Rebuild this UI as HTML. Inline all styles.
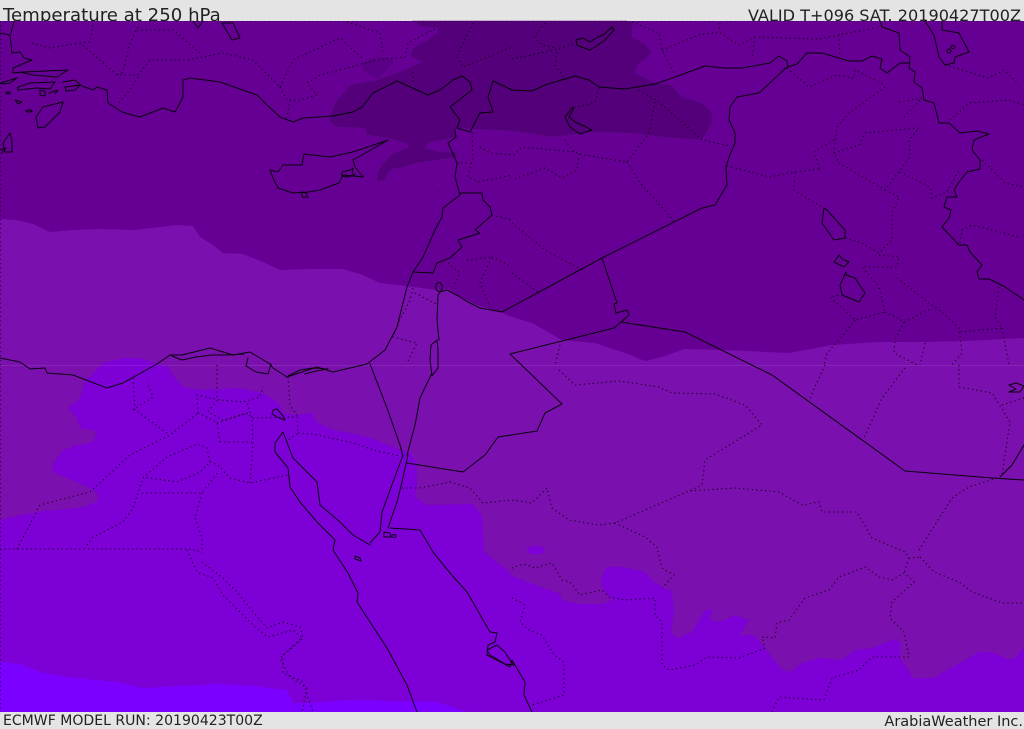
<!DOCTYPE html>
<html><head><meta charset="utf-8"><style>
html,body{margin:0;padding:0;background:#e4e4e4;width:1024px;height:729px;overflow:hidden}
svg{position:absolute;left:0;top:0}
.t{font-family:"DejaVu Sans","Liberation Sans",sans-serif;fill:#222}
.c{fill:none;stroke:#000;stroke-width:1;stroke-linejoin:round;stroke-linecap:round;opacity:.92}
.d{fill:none;stroke:#000;stroke-width:1.1;stroke-dasharray:1.2 3.2;opacity:.85}
</style></head><body>
<svg width="1024" height="729" viewBox="0 0 1024 729" xmlns="http://www.w3.org/2000/svg">
<rect width="1024" height="729" fill="#e4e4e4"/>
<text class="t" x="3" y="21" font-size="18.15">Temperature at 250 hPa</text>
<text class="t" x="1021" y="21" font-size="16.1" text-anchor="end">VALID T+096 SAT. 20190427T00Z</text>
<rect x="0" y="21" width="1024" height="691" fill="#660094"/>
<polygon fill="#53007a" stroke="#5e0a88" stroke-width=".6" points="413,21 422,27 437,28 437,33 427,40 413,48 410,55 421,62 400,72 377,80 350,85 337,100 331,113 330,122 337,127 365,128 367,135 387,138 408,144 408,148 393,153 383,163 377,173 377,182 385,180 390,170 417,163 457,157 457,152 440,152 425,148 430,142 447,139 456,137 455,132 457,128 473,129 512,131 552,137 592,132 629,133 662,137 702,140 712,123 712,113 702,103 682,97 672,85 655,83 635,73 638,65 652,53 644,43 632,37 633,23 627,21"/>
<polygon fill="#5a0086" points="362,62 377,57 392,58 393,63 378,79 363,70"/>
<polygon fill="#5c0088" points="435,191 445,188 444,190 436,193"/>
<polygon fill="#7a10ad" points="0,219 17,220 33,224 50,232 73,230 100,229 133,230 160,227 177,225 193,226 200,237 213,245 223,253 243,254 263,262 280,270 310,269 343,269 363,275 380,283 407,286 437,290 448,289 460,297 477,305 500,312 512,317 532,323 562,340 595,343 625,353 645,361 662,357 685,349 725,350 789,353 832,345 879,342 925,342 965,341 1024,338 1024,712 0,712"/>
<polygon fill="#7d00d6" points="0,520 20,515 43,511 80,508 97,502 98,495 90,488 53,472 52,465 63,450 77,445 93,442 97,433 93,430 80,428 77,418 68,408 80,398 85,382 100,366 103,363 123,358 140,358 157,364 168,366 173,375 183,387 200,390 240,388 263,393 278,402 283,413 293,415 312,413 317,422 333,430 360,435 377,440 400,450 410,452 417,463 417,485 415,497 427,505 473,504 482,515 484,552 497,562 507,570 512,576 549,590 559,593 562,600 579,604 602,604 612,600 602,588 601,578 607,567 622,567 645,572 654,582 672,592 674,612 671,632 677,638 692,632 705,610 714,610 709,617 715,622 725,620 735,615 749,620 740,635 754,635 765,648 782,670 790,672 802,663 819,658 842,660 855,650 872,648 895,639 901,643 899,657 909,670 912,678 934,678 952,667 969,658 979,652 992,652 1009,660 1015,658 1024,647 1024,712 0,712"/>
<ellipse cx="536" cy="550" rx="9" ry="4.5" fill="#7d00d6"/>
<polygon fill="#7b00ff" points="0,662 20,664 43,673 73,678 117,682 143,688 180,686 217,684 253,686 287,690 293,703 310,703 347,700 437,702 467,712 0,712"/>
<rect x="0" y="365" width="1024" height="1" fill="#fff" opacity=".09"/>
<line x1="0" y1="21.5" x2="1024" y2="21.5" class="d" style="opacity:.45"/>
<line x1="0.5" y1="21" x2="0.5" y2="712" class="d" style="opacity:.6"/>

<g class="c">
<polyline points="63,82 75,80 82,86 93,90 97,87 107,90 108,103 122,112 132,115 140,117 163,108 175,112 180,103 183,97 183,80 190,78 220,82 257,95 267,105 280,117 293,122 303,118 333,116 353,112 362,107 373,93 397,81 428,95 440,90 453,80 462,76 470,82 472,90 450,107 460,120 457,128 470,132 480,113 493,112 488,97 493,81 512,90 532,91 545,85 575,76 589,80 599,87 625,89 655,84 675,77 705,66 725,68 742,68 770,63 779,56 787,61 788,67 797,64 807,53 822,53 849,61 862,61 872,56 882,59 880,68 887,73 900,63 910,63"/>
<polyline points="880,21 882,27 899,33 900,50 910,57 909,68 915,72 914,82 922,88 924,100 934,103 939,123 949,123 960,133 977,131 989,134 974,140 972,150 980,160 980,169 967,172 959,182 954,190 957,197 947,197 944,207 951,210 949,218 942,227 959,245 967,245 970,252 982,265 977,272 979,279 989,279 1005,287 1024,300"/>
<polyline points="787,67 759,93 737,97 730,107 729,120 735,133 735,143 729,157 726,167 727,185 715,205 702,208 602,258 502,312 480,308 466,301 460,297 447,290 440,292 438,295 437,320 439,340"/>
<polyline points="602,258 617,303 614,304 616,313 627,310 629,315 614,328 510,354 562,404 545,413 537,431 498,437 485,455 463,472 407,463"/>
<polyline points="621,322 685,332 772,375 905,471 992,478 1024,480"/>
<polyline points="1000,477 1012,465 1024,445"/>
<polyline points="370,364 387,408 400,445 403,457"/>
<polyline points="367,364 385,350 397,327 407,287 413,272 423,257 435,230 442,217 443,208 460,195 455,177 457,163 448,143 456,137 455,130"/>
<polyline points="413,272 433,273 437,263 450,258 462,247 458,240 480,233 475,230 492,215 490,207 483,200 482,193 460,193"/>
<ellipse cx="439" cy="287" rx="3.3" ry="4.5"/>
<polygon points="437,340 431,345 430,360 432,376 438,368 438,350"/>
<polyline points="432,373 420,398 415,425 407,455"/>
<polyline points="408,455 402,482 397,502 388,528"/>
<polyline points="403,455 393,482 382,512 380,532 370,543"/>
<polyline points="370,545 353,535 340,522 320,505 317,482 293,458 283,432 275,443 275,452 288,468 290,487 300,502 317,522 335,540 333,550 348,573 358,593 357,602 387,648 407,685 417,712"/>
<polyline points="390,528 420,530 433,552 450,573 467,592 490,632 497,633 495,642 488,645 487,655 510,667 512,660 525,682 524,695 532,712"/>
<polyline points="0,358 20,362 30,369 45,368 47,373 73,375 107,388 123,383 157,364 170,355 182,355 210,348 233,355 250,352 270,364 273,368 287,377 317,367 333,372 367,364"/>
<polyline points="172,356 182,360 196,357 212,355 228,355 244,354"/>
<polyline points="248,358 246,366 256,372 268,374 271,364"/>
<polyline points="288,376 300,370 313,368 328,369 316,371 305,374"/>
<polygon points="270,170 278,172 283,165 302,165 304,154 330,157 353,152 388,140 353,160 355,167 363,177 343,175 339,183 320,190 308,192 293,193 278,188 273,178"/>
<polyline points="342,172 350,170 353,168 352,173 355,175 347,177 342,176 342,172"/>
<polyline points="302,192 306,193 308,197 302,197 302,192"/>
<polygon points="63,102 43,107 36,117 38,128 45,127 60,112"/>
<polygon points="10,133 3,143 5,152 12,152 12,140"/>
<polygon points="18,87 30,83 55,82 50,89 37,88 18,90"/>
<polyline points="0,33 10,35 12,53 20,52 24,58 32,60 13,68 13,73 23,72 68,70 57,77 33,75 20,72"/>
<polyline points="14,21 11,33"/>
<polygon points="0,83 17,78 10,83 2,84"/>
<polygon points="40,90 45,91 45,96 40,95"/>
<ellipse cx="8" cy="93" rx="2" ry="1"/>
<polygon points="15,100 22,102 18,104"/>
<ellipse cx="29" cy="111" rx="3" ry="1"/>
<polyline points="0,150 6,148 2,153"/>
<polygon points="65,87 80,85 75,90 66,91"/>
<polyline points="49,93 58,90 55,94"/>
<polygon points="222,23 232,40 240,38 233,23"/>
<polyline points="193,21 198,28 203,21"/>
<polygon points="576,40 583,38 590,42 598,37 603,35 612,27 614,30 605,40 595,47 590,50 584,48 577,45"/>
<polygon points="573,107 565,117 570,127 580,134 592,130 584,126 575,122 569,117 574,108"/>
<polyline points="925,21 934,35 939,57 945,65 954,63 955,57 969,52 959,33 942,30 942,21"/>
<ellipse cx="949" cy="51" rx="2" ry="2"/><ellipse cx="953" cy="47" rx="2" ry="1.5"/>
<polygon points="824,208 822,223 834,240 845,238 845,230 827,210"/>
<polygon points="839,255 834,262 844,267 849,262 842,259"/>
<polygon points="846,272 840,285 842,295 859,302 865,293 855,278 846,275"/>
<polyline points="1009,385 1016,383 1024,386 1020,392 1009,392 1016,389 1009,385"/>
<polygon points="273,410 272,414 279,418 285,420 283,416 277,409"/>
<polygon points="384,532 390,533 391,537 384,537"/><ellipse cx="394" cy="536" rx="2" ry="1.5"/>
<polygon points="355,556 360,558 361,561 355,559"/>
<polygon points="487,650 497,645 505,652 510,660 514,665 505,664 490,655"/>
</g>

<g class="d">
<polyline points="0,549 190,549 202,552"/>
<polyline points="17,549 40,505 90,492 130,455 170,435 198,413"/>
<polyline points="87,545 93,537 123,522 133,508 143,478 167,457 197,444 207,448 210,462 200,472 177,482 143,477"/>
<polyline points="142,493 202,493 218,472"/>
<polyline points="202,493 195,518 202,538 202,553"/>
<polyline points="210,462 218,465 230,478 250,483 288,475"/>
<polyline points="250,483 253,442 252,418 247,402"/>
<polyline points="220,442 253,442"/>
<polyline points="220,442 217,423 213,420 198,413"/>
<polyline points="198,413 197,395 220,400 243,402 260,397 263,387"/>
<polyline points="217,423 248,413 252,418 297,417 298,433 288,440"/>
<polyline points="298,433 313,434 353,443 377,451 400,456"/>
<polyline points="288,377 290,405 298,417"/>
<polyline points="217,365 217,400 208,412 223,420 248,413"/>
<polyline points="133,378 135,410 167,433"/>
<polyline points="133,410 153,397 147,382"/>
<polyline points="187,550 197,572 213,578 223,595 255,627 268,637 293,630 302,638 283,655 283,673 303,682 308,698 313,712"/>
<polyline points="202,562 223,578 237,592 253,612 267,628 283,622 300,627 303,638 287,652 280,658 290,677 307,688 302,712"/>
<polyline points="402,488 420,488 450,482 470,488 483,503 512,500 532,503 547,488 552,508 569,520 599,525 615,523 652,507 689,491 735,488 779,492 802,505 819,502 822,512 857,512 872,538 905,552 909,558 920,557"/>
<polyline points="615,523 645,537 657,547 662,568 674,575 662,588"/>
<polyline points="512,568 524,564 535,568 552,563 562,580 570,582 580,595 602,590 609,597 625,600 655,598 655,615 662,622 662,665 669,670 695,665 707,657 739,658 765,648 762,637 775,638 777,623 789,620 805,598 829,590 839,577 865,567 879,577 892,580 904,573 914,582 892,602 890,618 904,632 909,657 872,657 859,670 832,678 824,700 779,697 772,712"/>
<polyline points="909,558 904,573"/>
<polyline points="920,557 934,572 959,582 972,592 1002,603 1024,603"/>
<polyline points="919,550 952,498 969,487 1000,477"/>
<polyline points="825,365 810,398"/>
<polyline points="905,368 882,398 864,438"/>
<polyline points="959,365 959,387 992,393 1010,422 1002,475"/>
<polyline points="1002,405 1024,398"/>
<polyline points="559,370 575,385 619,381 659,387 672,393 715,394 745,405 762,425 705,460 702,485 689,491"/>
<polyline points="512,598 525,605 520,622 529,630 542,635 554,655 564,662 564,695 532,705"/>
<polyline points="512,59 555,50 579,42"/>
<polyline points="557,52 555,65 565,80"/>
<polyline points="545,23 534,37 542,45 555,48"/>
<polyline points="599,88 595,102 575,108"/>
<polyline points="639,90 659,102 702,140 730,146"/>
<polyline points="655,102 649,133 627,162 579,154 575,152 522,147 512,157"/>
<polyline points="565,140 575,153"/>
<polyline points="627,162 640,183 675,222"/>
<polyline points="579,154 577,170 562,178 545,168 512,180"/>
<polyline points="512,223 545,250 582,270"/>
<polyline points="512,273 539,293"/>
<polyline points="632,22 659,33 662,50 675,75"/>
<polyline points="662,50 699,35 719,32 739,45 755,37 819,39 849,33 875,28"/>
<polyline points="720,23 719,32"/>
<polyline points="755,37 752,58"/>
<polyline points="839,35 840,57"/>
<polyline points="787,68 809,87 837,75 854,78 855,70 885,85"/>
<polyline points="885,87 849,113 837,127 834,153"/>
<polyline points="834,140 814,152 820,170"/>
<polyline points="727,166 769,177 795,172 820,169"/>
<polyline points="795,172 794,190 815,203 824,208"/>
<polyline points="834,153 859,145 865,133 919,128 909,140 910,157 885,190 839,163 834,153"/>
<polyline points="900,172 930,187 932,198 947,192 959,170"/>
<polyline points="885,190 899,197 892,213 892,240 879,253 860,242 845,238"/>
<polyline points="899,102 922,98 904,117"/>
<polyline points="950,120 969,103 1009,100 1024,105"/>
<polyline points="982,160 1005,183 1024,187"/>
<polyline points="960,243 962,230 972,225 1019,237"/>
<polyline points="879,255 899,257 897,267 862,267 879,287 885,312 855,320 830,297 840,295"/>
<polyline points="897,278 929,303 942,312 959,328 962,353 952,365"/>
<polyline points="885,312 905,322 932,308"/>
<polyline points="904,322 895,340 894,353 917,365"/>
<polyline points="925,343 920,365"/>
<polyline points="999,287 995,317 1002,328 959,332"/>
<polyline points="1002,328 1009,365"/>
<polyline points="855,320 845,333 827,353 824,365"/>
<polyline points="560,345 555,365"/>
<polyline points="945,65 989,78 1004,70 1019,85"/>
<polyline points="32,43 50,48 80,43 117,75 138,75 150,60 187,60 223,53 253,60 280,87"/>
<polyline points="93,25 90,42 80,43"/>
<polyline points="138,27 130,43 123,72 117,75"/>
<polyline points="137,30 173,30 200,53"/>
<polyline points="138,77 130,90 117,105"/>
<polyline points="280,87 293,60 340,38 362,58"/>
<polyline points="280,87 287,100 300,100 317,95 307,83 320,75 377,60 405,57 408,43 437,28"/>
<polyline points="290,100 287,118"/>
<polyline points="347,22 380,33 383,55"/>
<polyline points="413,72 413,85"/>
<polyline points="457,57 463,67 512,47"/>
<polyline points="473,23 457,55"/>
<polyline points="472,132 473,157 468,177 478,182 512,175"/>
<polyline points="480,147 490,153 512,155"/>
<polyline points="457,163 473,163"/>
<polyline points="413,288 410,300 400,320 393,337 417,343 407,363"/>
<polyline points="415,293 438,305"/>
<polyline points="467,260 492,257 480,283 490,307"/>
<polyline points="492,215 512,220"/>
<polyline points="492,257 512,267"/>
<polyline points="448,263 460,273 453,287"/>
</g>

<rect x="0" y="712" width="1024" height="17" fill="#e4e4e4"/>
<text class="t" x="3" y="725" font-size="14.05">ECMWF MODEL RUN: 20190423T00Z</text>
<text class="t" x="1023" y="726" font-size="14.5" text-anchor="end">ArabiaWeather Inc.</text>
</svg>
</body></html>
